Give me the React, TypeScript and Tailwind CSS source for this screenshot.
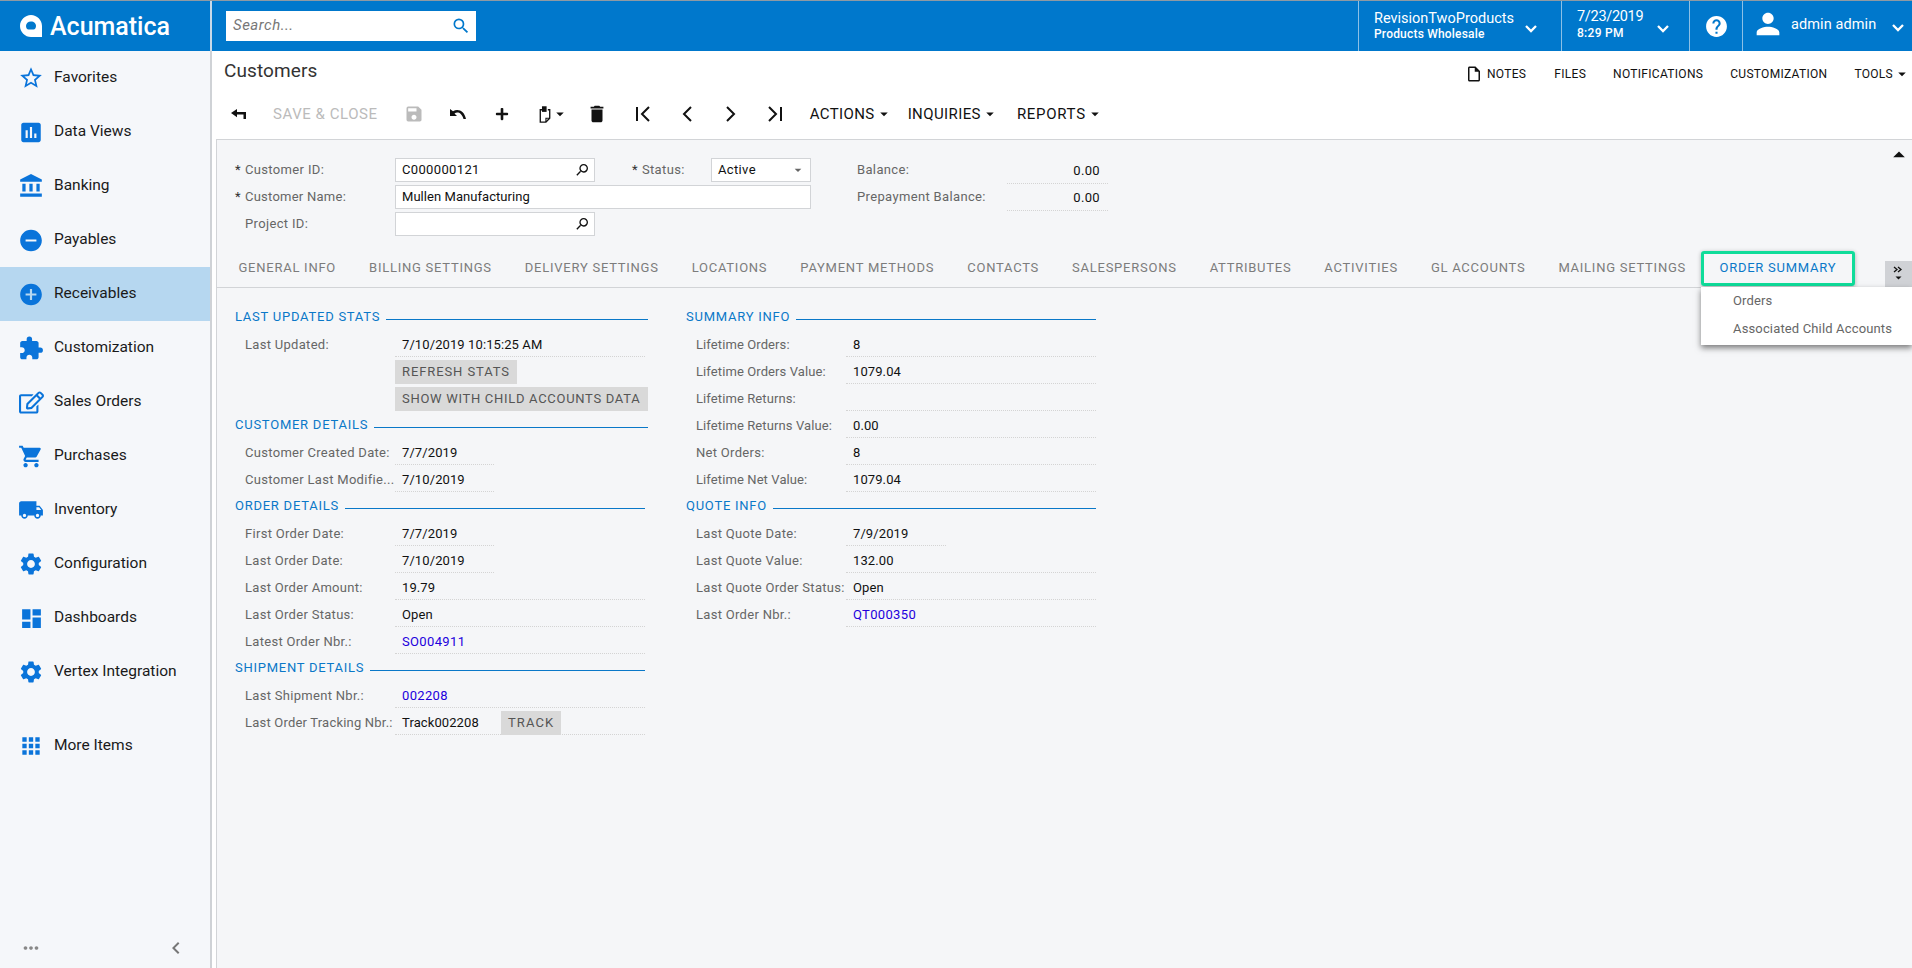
import React from "react";
import {
  MdStarBorder, MdAssessment, MdAccountBalance, MdRemoveCircle, MdAddCircle, MdExtension,
  MdShoppingCart, MdLocalShipping, MdSettings, MdDashboard, MdApps, MdMoreHoriz, MdChevronLeft,
  MdHelp, MdPerson, MdSearch, MdSave, MdDelete, MdOutlineInsertDriveFile,
  MdArrowDropDown, MdArrowDropUp,
} from "react-icons/md";
import { FaRegEdit, FaPlus } from "react-icons/fa";

const nav: [string, React.ComponentType<{ className?: string }>, string][] = [
  ["Favorites", MdStarBorder, "text-[30px]"],
  ["Data Views", MdAssessment, "text-[27px]"],
  ["Banking", MdAccountBalance, "text-[26px]"],
  ["Payables", MdRemoveCircle, "text-[27px]"],
  ["Receivables", MdAddCircle, "text-[27px]"],
  ["Customization", MdExtension, "text-[27px]"],
  ["Sales Orders", FaRegEdit, "text-[25px]"],
  ["Purchases", MdShoppingCart, "text-[27px]"],
  ["Inventory", MdLocalShipping, "text-[28px]"],
  ["Configuration", MdSettings, "text-[28px]"],
  ["Dashboards", MdDashboard, "text-[25px]"],
  ["Vertex Integration", MdSettings, "text-[28px]"],
];

function Section({ title, children, lineEnd }: { title: string; children?: React.ReactNode; lineEnd: string }) {
  return (
    <>
      <div className={`flex h-[27px] items-center ${lineEnd}`}>
        <span className="text-[13px] tracking-[0.75px] text-[#0a78c8] whitespace-nowrap">{title}</span>
        <span className="ml-[6px] mt-[6px] h-px flex-1 bg-[#0a78c8]" />
      </div>
      {children}
    </>
  );
}

function Row({ label, value, w = "w-[250px]", link, lt = "tracking-[0.3px]", children }: { label?: string; value?: string; w?: string; link?: boolean; lt?: string; children?: React.ReactNode }) {
  return (
    <div className="flex h-[27px] items-center pl-[10px] relative">
      <span className={`w-[150px] shrink-0 whitespace-nowrap mt-[2px] text-[13px] text-[#666] ${lt}`}>{label}</span>
      <span className={`${w} h-[27px] pl-[7px] pt-[7px] leading-[15px] border-b border-dotted border-[#d4d4d4] text-[13px] ${link ? "tracking-[0.35px] text-[#2200dd]" : "tracking-[0.1px] text-[#111]"}`}>{value}</span>
      {children}
    </div>
  );
}

function Btn({ children, w, t }: { children: React.ReactNode; w: string; t: string }) {
  return (
    <div className="flex h-[27px] items-end pl-[160px]">
      <span className={`${w} h-[24px] flex items-center pl-[7px] bg-[#d9d9d9] text-[13px] text-[#555] ${t}`}>{children}</span>
    </div>
  );
}

const tabs = ["GENERAL INFO", "BILLING SETTINGS", "DELIVERY SETTINGS", "LOCATIONS", "PAYMENT METHODS", "CONTACTS", "SALESPERSONS", "ATTRIBUTES", "ACTIVITIES", "GL ACCOUNTS", "MAILING SETTINGS"];

function Back({ className }: { className?: string }) {
  return (
    <svg viewBox="0 0 15 11" className={className} fill="currentColor">
      <path d="M6 0 0 4l6 4.200V5.500h6.500V10H15V3H6z" />
    </svg>
  );
}
function UndoIcon({ className }: { className?: string }) {
  return (
    <svg viewBox="0 0 16 12" className={className} fill="currentColor">
      <path d="M0 1v7h7L4.500 5.500C7.500 3.500 11.500 4.500 13.500 11H16C14.500 3 8 0 3 3.300z" />
    </svg>
  );
}
function Paste({ className }: { className?: string }) {
  return (
    <svg viewBox="0 0 12 18" className={className} fill="none" stroke="currentColor" strokeWidth="1.400">
      <path d="M3 4H1v13h6l4-4V4H9" />
      <path d="M7 17v-4h4" strokeWidth="1.200" />
      <rect x="3.500" y="1" width="3.500" height="4.500" fill="currentColor" />
    </svg>
  );
}
function Chevron({ className }: { className?: string }) {
  return (
    <svg viewBox="0 0 12 8" className={className} fill="none" stroke="currentColor" strokeWidth="2.300">
      <path d="M1 1l5 5 5-5" />
    </svg>
  );
}
function Nav({ d, className }: { d: string; className?: string }) {
  return (
    <svg viewBox="0 0 26 26" className={className} fill="none" stroke="currentColor" strokeWidth="2">
      <path d={d} />
    </svg>
  );
}

export default function App() {
  return (
    <div className="w-[1912px] h-[968px] overflow-hidden flex flex-col bg-white [font-family:Roboto,sans-serif]">
      <div className="h-px bg-[#8f9aa3]" />
      <header className="h-[50px] shrink-0 flex bg-[#0078cc] text-white">
        <div className="w-[210px] flex items-center pl-[20px] gap-[8px]">
          <svg viewBox="0 0 22 22" className="w-[22px] h-[22px]" fill="white">
            <path fillRule="evenodd" d="M11 0C5 0 0 5 0 11s5 11 11 11h11V11C22 5 17 0 11 0zm0 6.500c3 0 5 2 5 4.500 0 1.800-1 3.500-2.500 3.500h-5C7 14.500 6 12.800 6 11c0-2.500 2-4.500 5-4.500z" />
          </svg>
          <span className="text-[25px] font-medium leading-none">Acumatica</span>
        </div>
        <div className="w-[2px] bg-[#c7d9e8]" />
        <div className="flex-1 flex items-center pl-[14px]">
          <div className="w-[250px] h-[30px] bg-white flex items-center justify-between pl-[7px] pr-[5px]">
            <span className="italic text-[15px] tracking-[0.5px] text-[#777] -mt-[1px]">Search...</span>
            <MdSearch className="text-[20px] text-[#0078cc]" />
          </div>
        </div>
        <div className="w-[203px] border-l border-[#8cc0e6] pl-[15px] relative">
          <div className="text-[14.5px] leading-[17px] mt-[9px]">RevisionTwoProducts</div>
          <div className="text-[12px] leading-[14px] font-medium tracking-[0.2px]">Products Wholesale</div>
          <Chevron className="absolute left-[166px] top-[24px] w-[12px] h-[8px]" />
        </div>
        <div className="w-[128px] border-l border-[#8cc0e6] pl-[15px] relative">
          <div className="text-[14.5px] leading-[18px] mt-[7px] tracking-[-0.3px]">7/23/2019</div>
          <div className="text-[12px] leading-[15px] font-medium tracking-[0.3px]">8:29 PM</div>
          <Chevron className="absolute left-[95px] top-[24px] w-[12px] h-[8px]" />
        </div>
        <div className="w-[53px] border-l border-[#8cc0e6] flex items-center justify-center">
          <MdHelp className="text-[25px]" />
        </div>
        <div className="w-[170px] border-l border-[#8cc0e6] flex items-center relative">
          <MdPerson className="absolute left-[8px] top-[6px] text-[34px]" />
          <span className="ml-[48px] text-[14.5px] tracking-[0.1px] -mt-[3px]">admin admin</span>
          <Chevron className="absolute left-[149px] top-[23px] w-[12px] h-[8px]" />
        </div>
      </header>

      <div className="flex-1 flex min-h-0">
        <aside className="w-[212px] shrink-0 border-r-2 border-[#cfd2d6] bg-[#f5f7fa] flex flex-col">
          {nav.map(([name, Icon, size]) => (
            <div key={name} className={`h-[54px] shrink-0 flex items-center ${name === "Receivables" ? "bg-[#b6d7f0]" : ""}`}>
              <span className="w-[54px] pl-[18px] flex justify-start"><span className="w-[26px] flex justify-center"><Icon className={`${size} text-[#0a74da]`} /></span></span>
              <span className="text-[15.5px] text-[#1a1a1a]">{name}</span>
            </div>
          ))}
          <div className="h-[20px] shrink-0" />
          <div className="h-[54px] shrink-0 flex items-center">
            <span className="w-[54px] pl-[18px]"><span className="w-[26px] flex justify-center"><MdApps className="text-[30px] text-[#0a74da]" /></span></span>
            <span className="text-[15.5px] text-[#1a1a1a]">More Items</span>
          </div>
          <div className="flex-1" />
          <div className="h-[40px] flex items-center justify-between pl-[20px] pr-[22px]">
            <MdMoreHoriz className="text-[22px] text-[#888]" />
            <MdChevronLeft className="text-[24px] text-[#777]" />
          </div>
        </aside>

        <main className="flex-1 min-w-0 flex flex-col relative">
          <div className="h-[88px] shrink-0 relative">
            <div className="flex items-start justify-between pt-[6px] pl-[12px]">
              <h1 className="text-[19px] leading-[28px] tracking-[0.1px] text-[#333]">Customers</h1>
              <div className="flex items-center h-[32px] text-[12px] text-[#111] tracking-[0.3px] pr-[1px] mt-[1px]">
                <MdOutlineInsertDriveFile className="text-[18px] mr-[4px]" />
                <span>NOTES</span>
                <span className="ml-[28px]">FILES</span>
                <span className="ml-[27px]">NOTIFICATIONS</span>
                <span className="ml-[27px]">CUSTOMIZATION</span>
                <span className="ml-[27px]">TOOLS</span>
                <MdArrowDropDown className="text-[18px]" />
              </div>
            </div>
            <div className="flex items-center h-[26px] mt-[11px] pl-[19px] text-[#111]">
              <Back className="w-[15px] h-[11px]" />
              <span className="ml-[27px] text-[15px] tracking-[0.55px] text-[#bbb]">SAVE &amp; CLOSE</span>
              <MdSave className="ml-[26px] text-[20px] text-[#bbb]" />
              <UndoIcon className="ml-[26px] w-[16px] h-[12px]" />
              <FaPlus className="ml-[29px] text-[14px]" />
              <Paste className="ml-[30px] w-[12px] h-[17px]" />
              <MdArrowDropDown className="text-[18px]" />
              <MdDelete className="ml-[17px] text-[22px]" />
              <Nav d="M7 6v14M19 6l-7 7 7 7" className="ml-[22px] w-[26px] h-[26px]" />
              <Nav d="M17 6l-7 7 7 7" className="ml-[18px] w-[26px] h-[26px]" />
              <Nav d="M9 6l7 7-7 7" className="ml-[18px] w-[26px] h-[26px]" />
              <Nav d="M19 6v14M7 6l7 7-7 7" className="ml-[18px] w-[26px] h-[26px]" />
              <span className="ml-[22px] text-[15px] tracking-[0.4px]">ACTIONS</span>
              <MdArrowDropDown className="text-[18px]" />
              <span className="ml-[15px] text-[15px] tracking-[0.4px]">INQUIRIES</span>
              <MdArrowDropDown className="text-[18px]" />
              <span className="ml-[18px] text-[15px] tracking-[0.7px]">REPORTS</span>
              <MdArrowDropDown className="text-[18px]" />
            </div>
          </div>

          <div className="flex-1 ml-[4px] border-l border-t border-[#d2d4d7] bg-[#f5f6f8] relative min-h-0">
            <MdArrowDropUp className="absolute -right-[1px] top-[1px] text-[28px] text-[#111]" />
            <div className="h-[148px] border-b border-[#d2d4d7] flex flex-col">
              <div className="flex pt-[18px] h-[117px]">
                <div className="w-[178px] pl-[18px] text-[13px] tracking-[0.35px] text-[#666]">
                  <div className="h-[27px] leading-[24px]"><span className="text-[#333] mr-[4px]">*</span>Customer ID:</div>
                  <div className="h-[27px] leading-[24px]"><span className="text-[#333] mr-[4px]">*</span><span className="tracking-[0.25px]">Customer Name:</span></div>
                  <div className="h-[27px] leading-[24px] pl-[10px]">Project ID:</div>
                </div>
                <div className="w-[416px] text-[13px] tracking-[0.35px] text-[#111]">
                  <div className="flex h-[27px]">
                    <div className="w-[200px] h-[24px] bg-white border border-[#d2d4d7] flex items-center justify-between pl-[6px] pr-[4px]">
                      C000000121<MdSearch className="text-[16px] -scale-x-100" />
                    </div>
                    <span className="w-[116px] pl-[37px] leading-[24px] text-[#666]"><span className="text-[#333] mr-[4px]">*</span>Status:</span>
                    <div className="w-[100px] h-[24px] bg-white border border-[#d2d4d7] flex items-center justify-between pl-[6px] pr-[4px]">
                      Active<MdArrowDropDown className="text-[16px] text-[#666]" />
                    </div>
                  </div>
                  <div className="h-[24px] mb-[3px] bg-white border border-[#d2d4d7] flex items-center pl-[6px] tracking-[0.05px]">Mullen Manufacturing</div>
                  <div className="w-[200px] h-[24px] bg-white border border-[#d2d4d7] flex items-center justify-end pr-[4px]">
                    <MdSearch className="text-[16px] -scale-x-100" />
                  </div>
                </div>
                <div className="ml-[46px] text-[13px] tracking-[0.35px]">
                  {["Balance:", "Prepayment Balance:"].map((l) => (
                    <div key={l} className="flex h-[27px]">
                      <span className="w-[150px] leading-[24px] text-[#666]">{l}</span>
                      <span className="w-[101px] h-[26px] pt-[3px] pr-[8px] text-right border-b border-dotted border-[#d4d4d4] text-[#111]">0.00</span>
                    </div>
                  ))}
                </div>
              </div>
              <div className="flex-1 flex items-start pl-[5px] relative">
                {tabs.map((t) => (
                  <span key={t} className="px-[16.5px] h-[22px] leading-[22px] text-[13px] tracking-[0.75px] text-[#7c7c7c] whitespace-nowrap">{t}</span>
                ))}
                <span className="px-[18px] -ml-[1px] h-[22px] leading-[22px] text-[13px] tracking-[0.75px] text-[#0a78c8] whitespace-nowrap relative">
                  ORDER SUMMARY
                  <span className="absolute -left-[1px] -right-[1px] -top-[6px] h-[35px] border-[3px] border-[#0fdc9a] rounded-[3px] shadow-[0_1px_4px_rgba(0,0,0,0.3)]" />
                </span>
                <div className="absolute right-0 top-[4px] w-[27px] h-[26px] bg-[#d0d2d6]">
                  <svg viewBox="0 0 27 26" className="w-[27px] h-[26px]">
                    <path d="M9 6l3 2.500-3 2.500M13 6l3 2.500-3 2.500" fill="none" stroke="#111" strokeWidth="1.300" />
                    <path d="M10.500 15.500h6l-3 3z" fill="#111" />
                  </svg>
                </div>
              </div>
            </div>

            <div className="flex pt-[15px] pl-[18px]">
              <div className="w-[451px]">
                <Section title="LAST UPDATED STATS" lineEnd="w-[413px]" />
                <Row label="Last Updated:" value="7/10/2019 10:15:25 AM" />
                <Btn w="w-[122px]" t="tracking-[0.9px]">REFRESH STATS</Btn>
                <Btn w="w-[253px]" t="tracking-[0.7px]">SHOW WITH CHILD ACCOUNTS DATA</Btn>
                <Section title="CUSTOMER DETAILS" lineEnd="w-[413px]" />
                <Row label="Customer Created Date:" value="7/7/2019" w="w-[99px]" />
                <Row label="Customer Last Modifie..." value="7/10/2019" w="w-[99px]" />
                <Section title="ORDER DETAILS" lineEnd="w-[410px]" />
                <Row label="First Order Date:" value="7/7/2019" w="w-[99px]" />
                <Row label="Last Order Date:" value="7/10/2019" w="w-[99px]" />
                <Row label="Last Order Amount:" value="19.79" />
                <Row label="Last Order Status:" value="Open" />
                <Row label="Latest Order Nbr.:" value="SO004911" link />
                <Section title="SHIPMENT DETAILS" lineEnd="w-[410px]" />
                <Row label="Last Shipment Nbr.:" value="002208" link />
                <Row label="Last Order Tracking Nbr.:" value="Track002208" lt="tracking-[0.2px]">
                  <span className="absolute left-[266px] top-[3px] w-[60px] h-[24px] pl-[7px] flex items-center bg-[#d9d9d9] text-[13px] tracking-[1.1px] text-[#555]">TRACK</span>
                </Row>
              </div>
              <div className="w-[410px]">
                <Section title="SUMMARY INFO" lineEnd="w-[410px]" />
                <Row label="Lifetime Orders:" value="8" lt="tracking-[0.1px]" />
                <Row label="Lifetime Orders Value:" value="1079.04" lt="tracking-[0.1px]" />
                <Row label="Lifetime Returns:" value="" lt="tracking-[0.1px]" />
                <Row label="Lifetime Returns Value:" value="0.00" lt="tracking-[0.1px]" />
                <Row label="Net Orders:" value="8" />
                <Row label="Lifetime Net Value:" value="1079.04" lt="tracking-[0.1px]" />
                <Section title="QUOTE INFO" lineEnd="w-[410px]" />
                <Row label="Last Quote Date:" value="7/9/2019" w="w-[100px]" />
                <Row label="Last Quote Value:" value="132.00" />
                <Row label="Last Quote Order Status:" value="Open" />
                <Row label="Last Order Nbr.:" value="QT000350" link />
              </div>
            </div>

            <div className="absolute left-[1484px] top-[147px] right-0 h-[58px] bg-white shadow-[0_3px_6px_rgba(0,0,0,0.5)] pl-[32px] pt-[5px] text-[13px] tracking-[0.15px] text-[#666]">
              <div className="h-[28px] leading-[18px]">Orders</div>
              <div className="h-[28px] leading-[18px]">Associated Child Accounts</div>
            </div>
          </div>
        </main>
      </div>
    </div>
  );
}
